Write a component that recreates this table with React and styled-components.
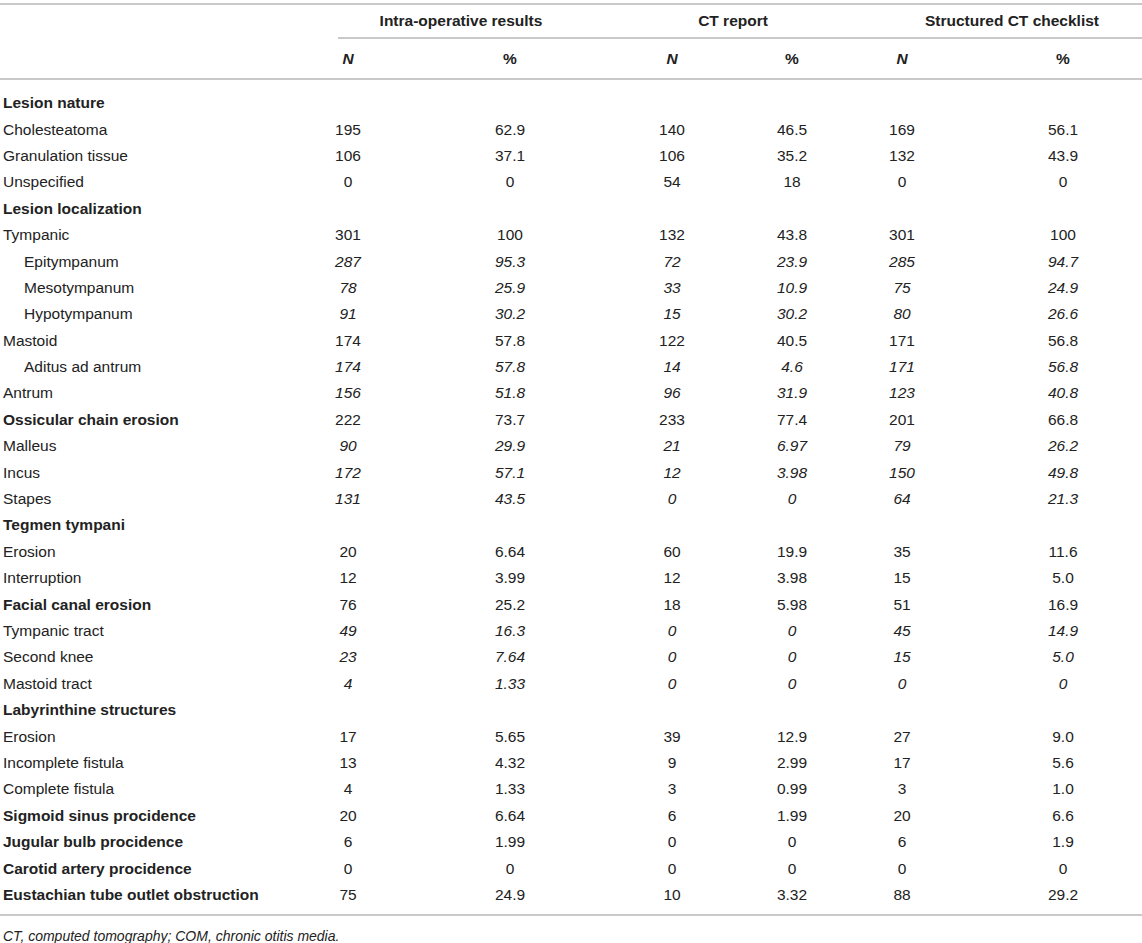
import React from "react";
import styled, { createGlobalStyle } from "styled-components";

const GlobalStyle = createGlobalStyle`
  html, body {
    margin: 0;
    padding: 0;
    background: #ffffff;
  }
  body {
    font-family: "Liberation Sans", Arial, sans-serif;
    color: #222222;
  }
`;

const RULE = "2px solid #c9c9c9";
const DATA_COLS = "256px 184px 140px 184px 56px 164px 1fr";

const Page = styled.div`
  width: 1142px;
  padding-top: 3px;
  font-size: 15.5px;
`;

const Table = styled.div`
  border-top: ${RULE};
  border-bottom: ${RULE};
`;

const GroupRow = styled.div`
  display: grid;
  grid-template-columns: 338px 246px 298px 1fr;
  height: 34px;
`;

const GroupCell = styled.div`
  display: flex;
  align-items: center;
  justify-content: center;
  font-weight: bold;
  border-bottom: ${(p) => (p.$ruled ? RULE : "none")};
`;

const SubHeadRow = styled.div`
  display: grid;
  grid-template-columns: ${DATA_COLS};
  height: 39px;
  border-bottom: ${RULE};
`;

const SubHeadCell = styled.div`
  display: flex;
  align-items: center;
  justify-content: center;
  font-weight: bold;
  font-style: ${(p) => (p.$italic ? "italic" : "normal")};
`;

const Body = styled.div`
  padding: 10px 0 6px;
`;

const Row = styled.div`
  display: grid;
  grid-template-columns: ${DATA_COLS};
  height: 26.4px;
  align-items: center;
`;

const Label = styled.div`
  padding-left: ${(p) => (p.$indent ? "24px" : "3px")};
  font-weight: ${(p) => (p.$bold ? "bold" : "normal")};
  white-space: nowrap;
`;

const Num = styled.div`
  display: flex;
  justify-content: center;
  font-style: ${(p) => (p.$italic ? "italic" : "normal")};
  white-space: nowrap;
`;

const Footnote = styled.div`
  padding: 11px 0 0 3px;
  font-size: 14px;
  font-style: italic;
  line-height: 18px;
`;

// [label, values, kind] — kind: "h" heading, "i" indented italic, "n" italic numbers
const rows = [
  ["Lesion nature", null, "h"],
  ["Cholesteatoma", ["195", "62.9", "140", "46.5", "169", "56.1"]],
  ["Granulation tissue", ["106", "37.1", "106", "35.2", "132", "43.9"]],
  ["Unspecified", ["0", "0", "54", "18", "0", "0"]],
  ["Lesion localization", null, "h"],
  ["Tympanic", ["301", "100", "132", "43.8", "301", "100"]],
  ["Epitympanum", ["287", "95.3", "72", "23.9", "285", "94.7"], "i"],
  ["Mesotympanum", ["78", "25.9", "33", "10.9", "75", "24.9"], "i"],
  ["Hypotympanum", ["91", "30.2", "15", "30.2", "80", "26.6"], "i"],
  ["Mastoid", ["174", "57.8", "122", "40.5", "171", "56.8"]],
  ["Aditus ad antrum", ["174", "57.8", "14", "4.6", "171", "56.8"], "i"],
  ["Antrum", ["156", "51.8", "96", "31.9", "123", "40.8"], "n"],
  ["Ossicular chain erosion", ["222", "73.7", "233", "77.4", "201", "66.8"], "h"],
  ["Malleus", ["90", "29.9", "21", "6.97", "79", "26.2"], "n"],
  ["Incus", ["172", "57.1", "12", "3.98", "150", "49.8"], "n"],
  ["Stapes", ["131", "43.5", "0", "0", "64", "21.3"], "n"],
  ["Tegmen tympani", null, "h"],
  ["Erosion", ["20", "6.64", "60", "19.9", "35", "11.6"]],
  ["Interruption", ["12", "3.99", "12", "3.98", "15", "5.0"]],
  ["Facial canal erosion", ["76", "25.2", "18", "5.98", "51", "16.9"], "h"],
  ["Tympanic tract", ["49", "16.3", "0", "0", "45", "14.9"], "n"],
  ["Second knee", ["23", "7.64", "0", "0", "15", "5.0"], "n"],
  ["Mastoid tract", ["4", "1.33", "0", "0", "0", "0"], "n"],
  ["Labyrinthine structures", null, "h"],
  ["Erosion", ["17", "5.65", "39", "12.9", "27", "9.0"]],
  ["Incomplete fistula", ["13", "4.32", "9", "2.99", "17", "5.6"]],
  ["Complete fistula", ["4", "1.33", "3", "0.99", "3", "1.0"]],
  ["Sigmoid sinus procidence", ["20", "6.64", "6", "1.99", "20", "6.6"], "h"],
  ["Jugular bulb procidence", ["6", "1.99", "0", "0", "6", "1.9"], "h"],
  ["Carotid artery procidence", ["0", "0", "0", "0", "0", "0"], "h"],
  ["Eustachian tube outlet obstruction", ["75", "24.9", "10", "3.32", "88", "29.2"], "h"],
];

export default function App() {
  return (
    <Page>
      <GlobalStyle />
      <Table>
        <GroupRow>
          <GroupCell />
          <GroupCell $ruled>Intra-operative results</GroupCell>
          <GroupCell $ruled>CT report</GroupCell>
          <GroupCell $ruled>Structured CT checklist</GroupCell>
        </GroupRow>
        <SubHeadRow>
          <SubHeadCell />
          <SubHeadCell $italic>N</SubHeadCell>
          <SubHeadCell>%</SubHeadCell>
          <SubHeadCell $italic>N</SubHeadCell>
          <SubHeadCell>%</SubHeadCell>
          <SubHeadCell $italic>N</SubHeadCell>
          <SubHeadCell>%</SubHeadCell>
        </SubHeadRow>
        <Body>
          {rows.map(([label, values, kind], i) => (
            <Row key={i}>
              <Label $bold={kind === "h"} $indent={kind === "i"}>
                {label}
              </Label>
              {values &&
                values.map((v, j) => (
                  <Num key={j} $italic={kind === "i" || kind === "n"}>
                    {v}
                  </Num>
                ))}
            </Row>
          ))}
        </Body>
      </Table>
      <Footnote>CT, computed tomography; COM, chronic otitis media.</Footnote>
    </Page>
  );
}
